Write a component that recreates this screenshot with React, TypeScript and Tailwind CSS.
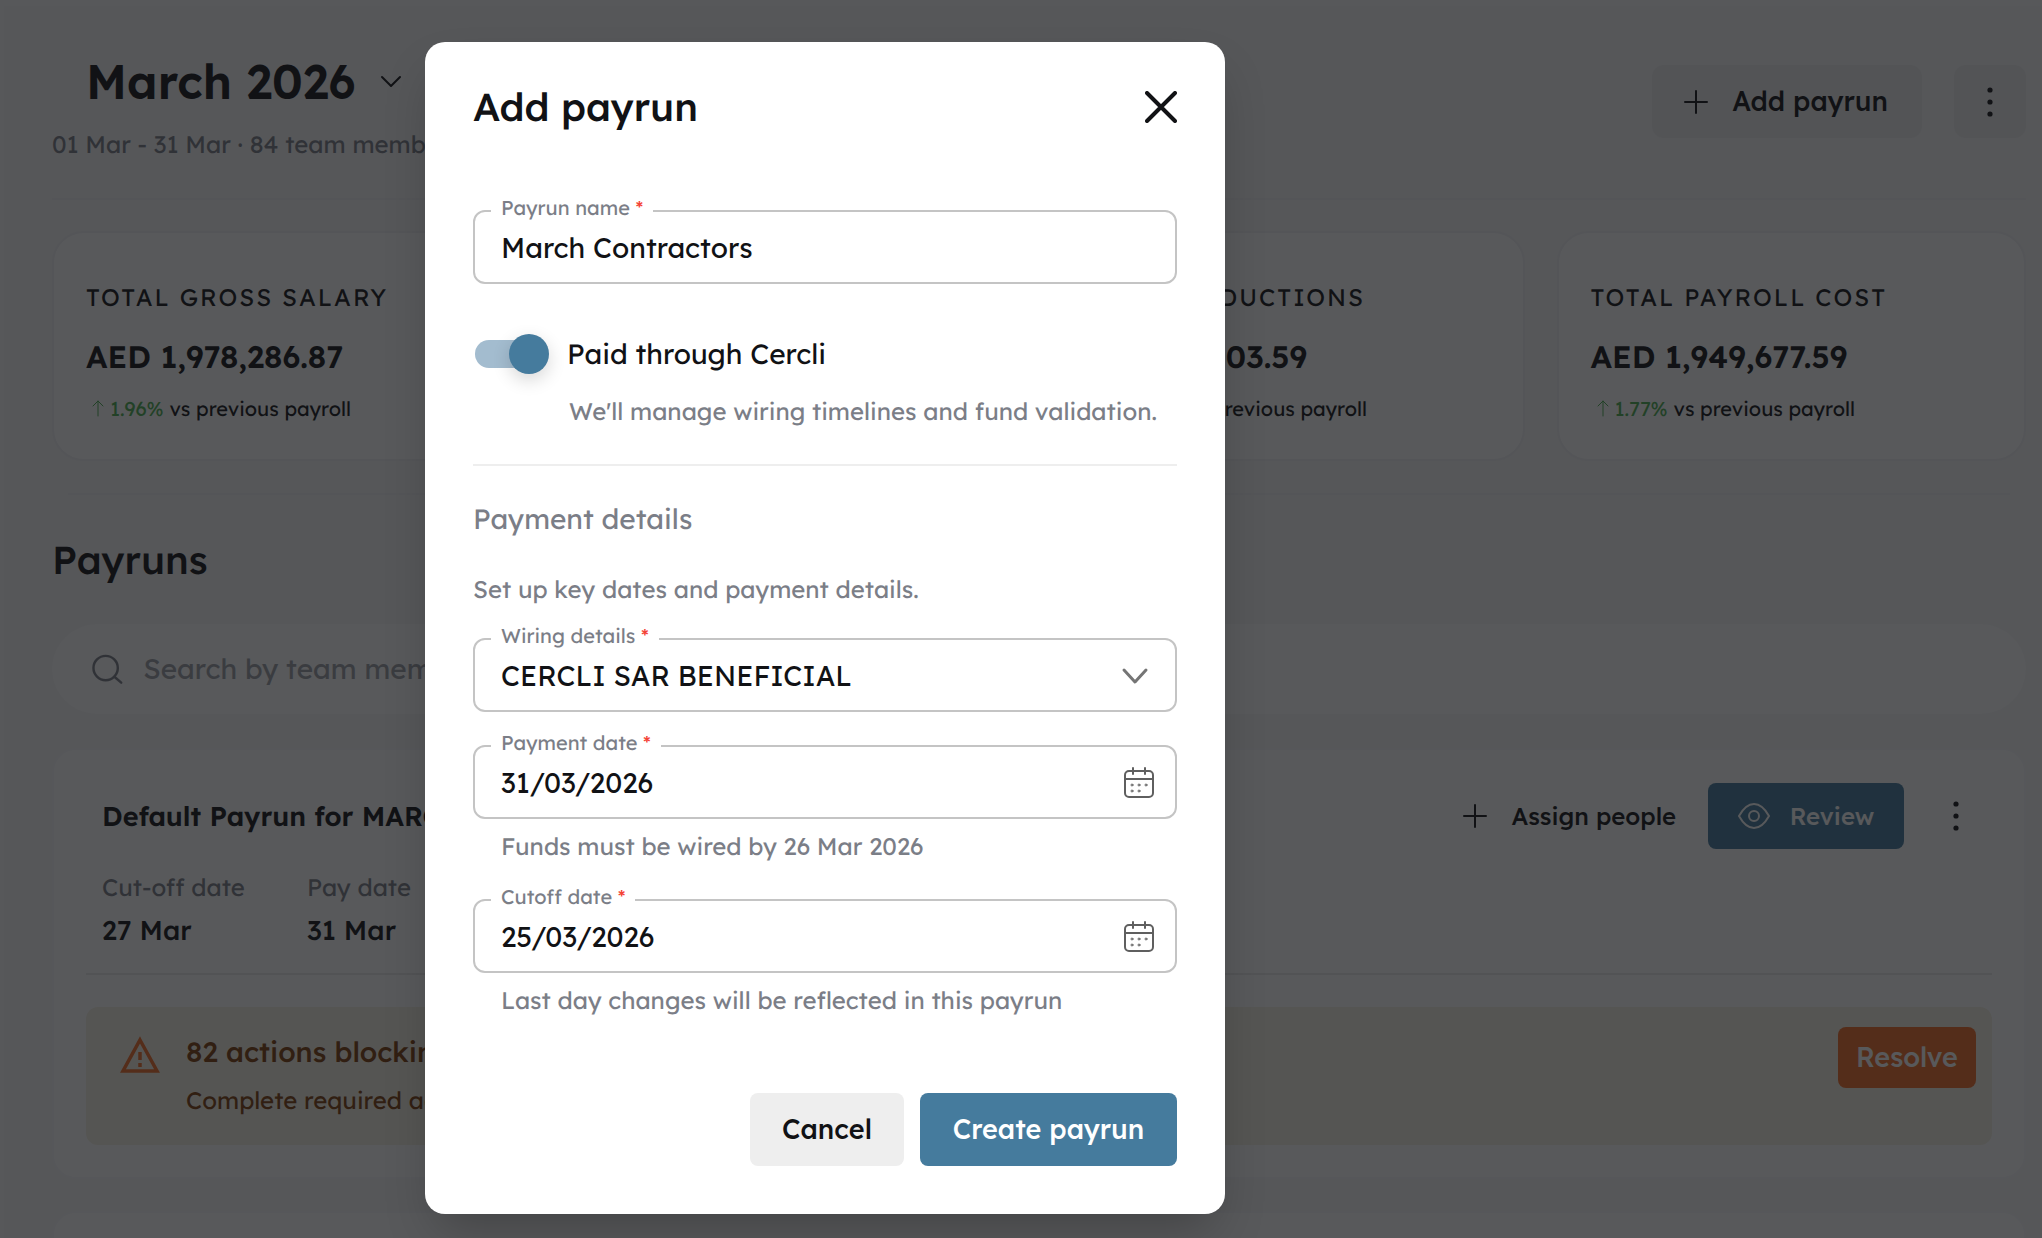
import { ReactNode, SVGProps, useState } from 'react';

interface SummaryCardProps {
  title: string;
  amount: string;
  change: string;
}

interface FieldProps {
  id: string;
  label: string;
  hint?: string;
  children: ReactNode;
}

const summary: SummaryCardProps[] = [
  { title: 'TOTAL GROSS SALARY', amount: 'AED 1,978,286.87', change: '1.96%' },
  { title: 'TOTAL NET SALARY', amount: 'AED 1,921,174.00', change: '1.77%' },
  { title: 'TOTAL DEDUCTIONS', amount: 'AED 28,503.59', change: '10.46%' },
  { title: 'TOTAL PAYROLL COST', amount: 'AED 1,949,677.59', change: '1.77%' },
];

function Icon({ children, ...props }: SVGProps<SVGSVGElement>) {
  return (
    <svg
      viewBox="0 0 32 32"
      fill="none"
      stroke="currentColor"
      strokeWidth="2"
      strokeLinecap="round"
      strokeLinejoin="round"
      aria-hidden="true"
      {...props}
    >
      {children}
    </svg>
  );
}

function PlusIcon() {
  return (
    <Icon className="size-8">
      <path d="M5 16h22M16 5v22" />
    </Icon>
  );
}

function DotsIcon() {
  return (
    <Icon className="h-8 w-6" viewBox="0 0 24 32" fill="currentColor" stroke="none">
      <circle cx="12" cy="4" r="2.6" />
      <circle cx="12" cy="16" r="2.6" />
      <circle cx="12" cy="28" r="2.6" />
    </Icon>
  );
}

function CalendarIcon() {
  return (
    <Icon className="size-8 shrink-0 text-[#5f5f5f]">
      <rect x="2" y="4" width="28" height="26" rx="4" />
      <path d="M2 12h28M10 1v6M22 1v6" />
      <g strokeWidth="1">
        <circle cx="9" cy="18" r="1" />
        <circle cx="16" cy="18" r="1" />
        <circle cx="23" cy="18" r="1" />
        <circle cx="9" cy="24" r="1" />
        <circle cx="16" cy="24" r="1" />
      </g>
    </Icon>
  );
}

function SummaryCard({ title, amount, change }: SummaryCardProps) {
  return (
    <div className="h-[230px] rounded-[32px] border-2 border-[#f1f1f3] bg-white px-8 pt-12">
      <h2 className="text-[24px] leading-8 tracking-[2px] whitespace-nowrap">{title}</h2>
      <p className="mt-6 text-[31px] leading-10 font-semibold whitespace-nowrap">{amount}</p>
      <p className="mt-4 flex items-center text-[20px] leading-8 whitespace-nowrap">
        <Icon className="size-6 text-[#4caf50]" viewBox="0 0 24 24" strokeWidth="1">
          <path d="M12 19V4M7 9l5-5 5 5" />
        </Icon>
        <span className="mr-1.5 text-[#4caf50]">{change}</span>
        vs previous payroll
      </p>
    </div>
  );
}

function Field({ id, label, hint, children }: FieldProps) {
  return (
    <div>
      <fieldset className="h-[82px] rounded-xl border-2 border-[#c4c4c4] pl-4">
        <legend className="px-2.5 pb-1.5 text-[20px] leading-3 text-[#7b7e87]">
          <label htmlFor={id}>
            {label} <span className="text-[#f44336]">*</span>
          </label>
        </legend>
        <div className="flex h-14 items-center pr-5 pl-2.5">{children}</div>
      </fieldset>
      {hint && <p className="mt-[7px] pl-7 text-[24px] leading-10 text-[#7b7e87]">{hint}</p>}
    </div>
  );
}

function PayrollPage() {
  return (
    <main className="mt-1.5 ml-1 min-h-screen bg-[#f7f7f8] pt-11 pr-4 pl-12">
      <header className="flex items-start justify-between border-b-2 border-[#f1f1f3] pb-9">
        <div>
          <button className="flex items-center gap-6 pl-[34px] text-[47px] leading-[64px] font-semibold">
            March 2026
            <Icon className="size-6" viewBox="0 0 24 24">
              <path d="M3 7l9 9 9-9" />
            </Icon>
          </button>
          <p className="mt-3 text-[24px] leading-9 text-[#7b7e87]">
            01 Mar - 31 Mar · 84 team members
          </p>
        </div>
        <div className="mt-[15px] flex gap-8">
          <button className="flex h-[73px] items-center gap-5 rounded-xl bg-[#eeeeee] pr-[34px] pl-7 text-[27px] font-medium">
            <PlusIcon />
            Add payrun
          </button>
          <button
            aria-label="More options"
            className="flex h-[73px] w-[72px] items-center justify-center rounded-xl bg-[#eeeeee]"
          >
            <DotsIcon />
          </button>
        </div>
      </header>

      <section className="mt-[31px] grid grid-cols-4 gap-8">
        {summary.map((item) => (
          <SummaryCard key={item.title} {...item} />
        ))}
      </section>

      <hr className="mx-4 mt-8 border-t-2 border-[#f1f1f3]" />

      <h1 className="mt-[37px] text-[39px] leading-[56px] font-medium">Payruns</h1>
      <label className="mt-9 flex h-[90px] items-center gap-5 rounded-full bg-[#fdfdfd] pl-10 text-[#7b7e87]">
        <Icon className="size-8" strokeWidth="2.5">
          <circle cx="14" cy="15" r="12.5" />
          <path d="M23 24l7 6" />
        </Icon>
        <input
          type="search"
          aria-label="Search by team member"
          placeholder="Search by team member"
          className="w-full text-[28px] outline-none placeholder:text-[#9b9ea5]"
        />
      </label>

      <section className="mt-[34px] rounded-3xl border-2 border-[#f9f9fa] bg-white px-8 pt-[33px] pb-8">
        <div className="flex items-center justify-between pr-6 pl-4">
          <h2 className="text-[27px] leading-10 font-semibold">Default Payrun for MARCH 2026</h2>
          <div className="flex items-center">
            <button className="flex items-center gap-5 text-[24px] font-medium">
              <PlusIcon />
              Assign people
            </button>
            <button className="ml-8 flex h-[66px] w-[196px] items-center justify-center gap-5 rounded-lg bg-[#457b9d] text-[24px] font-medium text-white">
              <Icon className="size-8">
                <path d="M1 16C6 7 11 4 16 4s10 3 15 12c-5 9-10 12-15 12S6 25 1 16z" />
                <circle cx="16" cy="16" r="5" />
              </Icon>
              Review
            </button>
            <button aria-label="Payrun options" className="ml-10">
              <DotsIcon />
            </button>
          </div>
        </div>
        <dl className="mt-[18px] flex gap-[62px] px-4">
          <div>
            <dt className="text-[24px] leading-10 text-[#7b7e87]">Cut-off date</dt>
            <dd className="text-[27px] leading-[46px] font-medium">27 Mar</dd>
          </div>
          <div>
            <dt className="text-[24px] leading-10 text-[#7b7e87]">Pay date</dt>
            <dd className="text-[27px] leading-[46px] font-medium">31 Mar</dd>
          </div>
        </dl>
        <hr className="mt-5 border-t-2 border-[#e9eaec]" />
        <div className="mt-8 flex h-[138px] items-start rounded-xl bg-[#f6f1e4] pt-5 pr-4 pl-[34px]">
          <Icon
            className="mt-2 size-10 text-[#f06c26]"
            viewBox="0 0 40 40"
            strokeWidth="3.5"
            strokeLinejoin="miter"
          >
            <path d="M20 5L37 36H3z" />
            <path d="M20 17v8M20 28v4" strokeLinecap="butt" />
          </Icon>
          <div className="ml-[26px] flex-1 text-[#7c3f0b]">
            <h3 className="text-[28px] leading-[50px] font-medium">82 actions blocking this payrun</h3>
            <p className="text-[24px] leading-[46px]">Complete required actions to continue</p>
          </div>
          <button className="h-[61px] w-[138px] rounded-lg bg-[#f06c26] text-[27px] font-medium text-white">
            Resolve
          </button>
        </div>
      </section>

      <section className="mt-8 h-24 rounded-3xl border-2 border-[#f9f9fa] bg-white" />
    </main>
  );
}

function AddPayrunDialog() {
  const [viaCercli, setViaCercli] = useState(true);

  return (
    <form
      role="dialog"
      aria-labelledby="dialog-title"
      className="w-[800px] rounded-[20px] bg-white px-12 pt-8 pb-12 shadow-2xl"
    >
      <div className="flex items-center justify-between">
        <h2 id="dialog-title" className="text-[39px] leading-[66px] font-medium">
          Add payrun
        </h2>
        <button type="button" aria-label="Close">
          <Icon className="size-8" strokeWidth="4">
            <path d="M2 2l28 28M30 2L2 30" />
          </Icon>
        </button>
      </div>

      <div className="mt-[62px]">
        <Field id="payrun-name" label="Payrun name">
          <input id="payrun-name" defaultValue="March Contractors" className="w-full text-[28px] outline-none" />
        </Field>
      </div>

      <label className="mt-[50px] flex h-10 items-center gap-[18px] text-[28px]">
        <span className="relative flex h-10 w-[76px] items-center pl-0.5">
          <input
            type="checkbox"
            role="switch"
            checked={viaCercli}
            onChange={(e) => setViaCercli(e.target.checked)}
            className="peer h-7 w-[68px] appearance-none rounded-full bg-gray-300 checked:bg-[#a3bccf]"
          />
          <span className="pointer-events-none absolute left-0 size-10 rounded-full bg-[#457b9d] shadow-[0_6px_18px_rgba(0,0,0,0.16)] peer-checked:right-0 peer-checked:left-auto" />
        </span>
        Paid through Cercli
      </label>
      <p className="mt-[17px] pl-24 text-[24px] leading-10 text-[#7b7e87]">
        We'll manage wiring timelines and fund validation.
      </p>

      <hr className="mt-[33px] border-t-2 border-[#eeeeee]" />

      <h3 className="mt-[33px] text-[28px] leading-10 text-[#7b7e87]">Payment details</h3>
      <p className="mt-[30px] text-[24px] leading-10 text-[#7b7e87]">
        Set up key dates and payment details.
      </p>

      <div className="mt-[21px] flex flex-col gap-[25px]">
        <Field id="wiring" label="Wiring details">
          <select id="wiring" className="w-full appearance-none text-[28px] outline-none">
            <option>CERCLI SAR BENEFICIAL</option>
          </select>
          <Icon className="pointer-events-none mr-1 size-8 shrink-0 text-[#757575]" strokeWidth="3">
            <path d="M5 10l11 12 11-12" />
          </Icon>
        </Field>
        <Field id="payment-date" label="Payment date" hint="Funds must be wired by 26 Mar 2026">
          <input id="payment-date" defaultValue="31/03/2026" className="w-full text-[28px] outline-none" />
          <button type="button" aria-label="Pick payment date">
            <CalendarIcon />
          </button>
        </Field>
        <Field id="cutoff-date" label="Cutoff date" hint="Last day changes will be reflected in this payrun">
          <input id="cutoff-date" defaultValue="25/03/2026" className="w-full text-[28px] outline-none" />
          <button type="button" aria-label="Pick cutoff date">
            <CalendarIcon />
          </button>
        </Field>
      </div>

      <div className="mt-[73px] flex justify-end gap-4 text-[27px] font-medium">
        <button type="button" className="h-[73px] w-[154px] rounded-lg bg-[#eeeeee]">
          Cancel
        </button>
        <button type="submit" className="h-[73px] w-[257px] rounded-lg bg-[#457b9d] text-white">
          Create payrun
        </button>
      </div>
    </form>
  );
}

export default function App() {
  return (
    <div className="relative flow-root h-screen overflow-hidden bg-[#fafafb] font-[Lexend,Inter,sans-serif] text-[#111215] [text-rendering:geometricPrecision]">
      <PayrollPage />
      <div className="absolute inset-0 flex items-start justify-center bg-[#111215]/70 pt-[42px] pr-[392px]">
        <AddPayrunDialog />
      </div>
    </div>
  );
}
